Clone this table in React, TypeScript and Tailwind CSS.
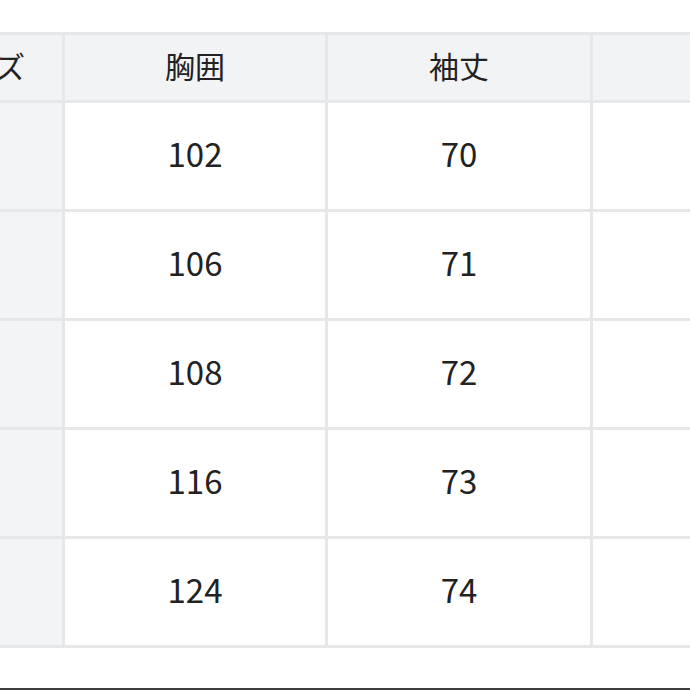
import React from "react";

const rows = [
  { size: "XS", chest: "102", sleeve: "70", len: "66" },
  { size: "S", chest: "106", sleeve: "71", len: "100" },
  { size: "M", chest: "108", sleeve: "72", len: "70" },
  { size: "L", chest: "116", sleeve: "73", len: "72" },
  { size: "LL", chest: "124", sleeve: "74", len: "74" },
];

export default function App() {
  const font = { fontFamily: '"Noto Sans CJK JP", "Noto Sans", sans-serif' };
  return (
    <div
      className="relative w-[690px] h-[690px] overflow-hidden bg-white flex flex-col text-[#222222]"
      style={font}
    >
      <div className="pt-[32px]">
        <div className="ml-[-104px] w-max grid grid-cols-[163px_260px_262px_262px] gap-[3px] p-[3px] bg-[#e6e7e9]">
          <div className="h-[65px] pb-[6px] bg-[#f2f3f5] flex items-center justify-center text-[30px] leading-none">サイズ</div>
          <div className="h-[65px] pb-[6px] bg-[#f2f3f5] flex items-center justify-center text-[30px] leading-none">胸囲</div>
          <div className="h-[65px] pb-[6px] bg-[#f2f3f5] flex items-center justify-center text-[30px] leading-none">袖丈</div>
          <div className="h-[65px] pb-[6px] bg-[#f2f3f5] flex items-center justify-center text-[30px] leading-none">着丈</div>
          {rows.map((r) => (
            <React.Fragment key={r.size}>
              <div className="h-[106px] pb-[6px] bg-[#f3f4f6] flex items-center justify-center text-[33px] leading-none">{r.size}</div>
              <div className="h-[106px] pb-[6px] bg-white flex items-center justify-center text-[33px] leading-none">{r.chest}</div>
              <div className="h-[106px] pb-[6px] bg-white flex items-center justify-center text-[33px] leading-none">{r.sleeve}</div>
              <div className="h-[106px] pb-[6px] bg-white flex items-center justify-center text-[33px] leading-none">{r.len}</div>
            </React.Fragment>
          ))}
        </div>
      </div>
      <div className="flex-1" />
      <div className="h-[2px] bg-[#3c3c3c]" />
    </div>
  );
}
